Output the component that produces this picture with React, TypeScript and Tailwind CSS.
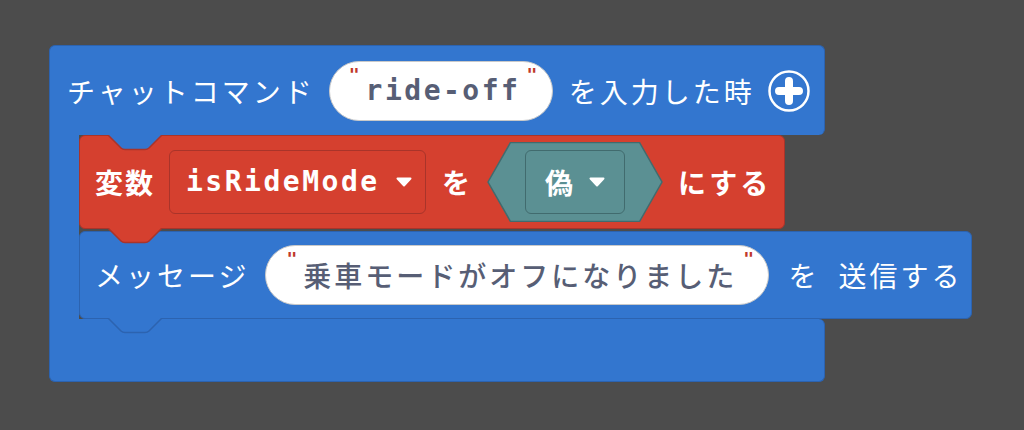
import React from 'react';

const JP = "font-['Noto_Sans_CJK_JP',sans-serif]";
const MONO = "font-['DejaVu_Sans_Mono','Noto_Sans_CJK_JP',monospace]";

function Caret({ className = '' }: { className?: string }) {
  return (
    <svg width="16" height="10" viewBox="0 0 16 10" className={className}>
      <path d="M1.5 1.5 H14.5 L8 8.5 Z" fill="#fff" stroke="#fff" strokeWidth="2" strokeLinejoin="round" />
    </svg>
  );
}

function Quote() {
  return (
    <span className={`self-start mt-[4px] text-[#c0392b] text-[18px] leading-none ${MONO} font-bold`}>"</span>
  );
}

// notch / tab trapezoid, drawn over the block edge
function Tab({ fill, stroke, className }: { fill: string; stroke: string; className: string }) {
  return (
    <svg width="56" height="16" viewBox="0 0 56 16" className={className}>
      <path d="M1 0 L14 13 Q15.5 14.5 18 14.5 H38 Q40.5 14.5 42 13 L55 0 Z" fill={fill} />
      <path d="M1 0 L14 13 Q15.5 14.5 18 14.5 H38 Q40.5 14.5 42 13 L55 0" fill="none" stroke={stroke} strokeWidth="1.5" />
    </svg>
  );
}

function PlusIcon() {
  return (
    <svg width="44" height="44" viewBox="0 0 44 44">
      <circle cx="22" cy="22" r="19.5" fill="none" stroke="#fff" strokeWidth="2.5" />
      <path d="M22 12 V32 M12 22 H32" stroke="#fff" strokeWidth="8" strokeLinecap="round" />
    </svg>
  );
}

export default function App() {
  return (
    <div className="w-[1024px] h-[430px] bg-[#4c4c4c] pl-[49px] pt-[45px] overflow-hidden">
      <div className="flex flex-col">
        {/* top row: chat command event */}
        <div className="w-[776px] h-[90px] bg-[#3376cf] rounded-t-[6px] rounded-br-[6px] border border-b-0 border-[#2c63b0] flex items-center pl-[17px]">
          <span className={`${JP} text-white text-[28px] tracking-[3px]`}>チャットコマンド</span>
          <div className="ml-[14px] w-[224px] h-[60px] bg-white rounded-full border border-[#c9c9c9] flex items-center pl-[19px] gap-[6px]">
            <Quote />
            <span className={`${MONO} text-[#575e75] text-[28px] font-bold tracking-[2.5px]`}>ride-off</span>
            <Quote />
          </div>
          <span className={`${JP} ml-[16px] text-white text-[28px] tracking-[3px]`}>を入力した時</span>
          <div className="ml-[12px]">
            <PlusIcon />
          </div>
        </div>

        {/* middle: arm + stacked statements */}
        <div className="flex">
          <div className="w-[30px] bg-[#3376cf] border-l border-[#2c63b0]" />
          <div className="flex flex-col gap-[2px]">
            {/* set variable */}
            <div className="relative w-[706px] h-[94px] bg-[#d5402f] rounded-[6px] border border-[#a9342a] flex items-center pl-[15px]">
              <Tab fill="#3376cf" stroke="#a9342a" className="absolute left-[27px] -top-[1px]" />
              <Tab fill="#d5402f" stroke="#a9342a" className="absolute left-[27px] top-full z-10" />
              <span className={`${JP} text-white text-[28px] font-bold tracking-[2px]`}>変数</span>
              <div className="ml-[14px] w-[257px] h-[64px] rounded-[6px] border border-[#a9342a] flex items-center pl-[16px] gap-[16px]">
                <span className={`${MONO} text-white text-[28px] font-bold tracking-[2.5px]`}>isRideMode</span>
                <Caret />
              </div>
              <span className={`${JP} ml-[16px] text-white text-[28px] font-bold`}>を</span>
              <div className="relative ml-[17px] w-[176px] h-[80px] flex items-center justify-center">
                <svg width="176" height="80" viewBox="0 0 176 80" className="absolute inset-0">
                  <path d="M1 40 L23.5 0.5 H152.5 L175 40 L152.5 79.5 H23.5 Z" fill="#5b9093" stroke="#416b6e" strokeWidth="1.5" />
                </svg>
                <div className="relative w-[100px] h-[64px] rounded-[6px] border border-[#416b6e] flex items-center justify-center gap-[16px]">
                  <span className={`${JP} text-white text-[28px] font-bold`}>偽</span>
                  <Caret />
                </div>
              </div>
              <span className={`${JP} ml-[15px] text-white text-[28px] font-bold tracking-[3px]`}>にする</span>
            </div>

            {/* send message */}
            <div className="relative w-[893px] h-[88px] bg-[#3376cf] rounded-[6px] border border-[#2c63b0] flex items-center pl-[15px]">
              <Tab fill="#3376cf" stroke="#2c63b0" className="absolute left-[27px] top-full z-10" />
              <span className={`${JP} text-white text-[28px] tracking-[3px]`}>メッセージ</span>
              <div className="ml-[16px] w-[504px] h-[60px] bg-white rounded-full border border-[#c9c9c9] flex items-center pl-[20px] gap-[6px]">
                <Quote />
                <span className={`${JP} text-[#575e75] text-[28px] font-medium tracking-[3px]`}>乗車モードがオフになりました</span>
                <Quote />
              </div>
              <span className={`${JP} ml-[19px] text-white text-[28px]`}>を</span>
              <span className={`${JP} ml-[22px] text-white text-[28px] tracking-[3px]`}>送信する</span>
            </div>
          </div>
        </div>

        {/* bottom bar */}
        <div className="w-[776px] h-[63px] bg-[#3376cf] rounded-b-[6px] rounded-tr-[6px] border border-t-0 border-[#2c63b0]" />
      </div>
    </div>
  );
}
